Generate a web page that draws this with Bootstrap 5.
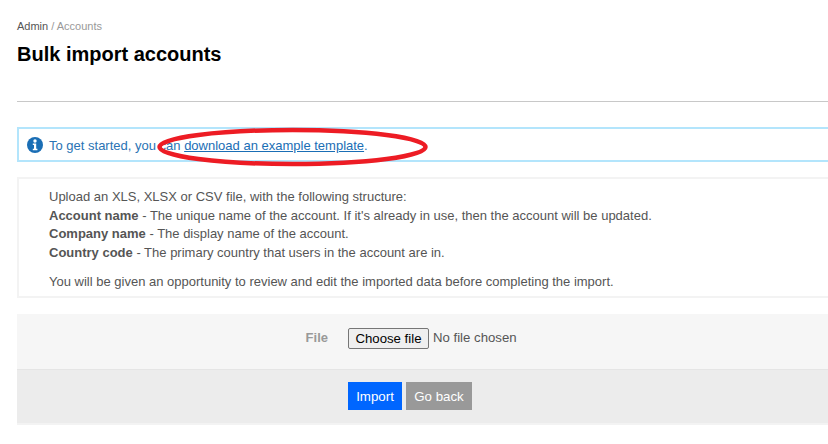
<!DOCTYPE html>
<html lang="en">
<head>
<meta charset="utf-8">
<title>Bulk import accounts</title>
<link href="https://cdn.jsdelivr.net/npm/bootstrap@5.3.0/dist/css/bootstrap.min.css" rel="stylesheet">
<style>
html,body{height:444px;overflow:hidden;background:#fff}
body{font-family:"Liberation Sans",Arial,sans-serif;font-size:13px;color:#555;position:relative}
.page-wrap{padding:19px 0 0 17px;width:828px}
.crumbs{font-size:11px;line-height:14px;color:#999}
.crumbs span{color:#555}
.page-title{font-size:20px;font-weight:700;line-height:24px;color:#000;margin:9px 0 0}
.rule-line{height:1px;background:#c8c8c8;margin-top:35px}
.info-box{height:35px;margin-top:25px;border:2px solid #b3e5fc;border-right:0;padding-left:8px;color:#2a73b4;font-size:13px;gap:6px}
.info-box svg{margin-top:1px}
.info-box div{padding-top:3px}
.info-box a{color:#1a6eb5}
.struct-box{height:121px;margin-top:15px;border:2px solid #f3f3f3;border-right:0;padding:9px 0 0 30px;line-height:18.7px;font-size:13px}
.struct-box p{margin:10px 0 0}
.form-top{height:56px;margin-top:16px;background:#f6f6f6;border-bottom:1px solid #e5e5e5;padding-top:13px;color:#555}
.form-top label{width:311px;text-align:right;font-weight:700;color:#999;font-size:13px;line-height:22px}
.pick-file{margin-left:20px;gap:4px;line-height:22px;font-size:13.2px}
.pick-btn{height:21px;width:81px;padding:0;border:1px solid #767676;border-radius:2px;background:#efefef;color:#000;font-size:13.2px;line-height:19px}
.form-foot{height:55px;background:#ececec;border-bottom:2px solid #f3f3f3;padding:12px 0 0 331px;gap:4px}
.form-foot .btn{height:28px;padding:1px 0 0;border:0;border-radius:0;font-size:13.3px;line-height:27px;color:#fff}
.form-foot .btn-import{background:#06f;width:54px}
.form-foot .btn-back{background:#999;width:66px}
.ring{position:absolute;left:150px;top:122px;width:290px;height:50px;pointer-events:none}
</style>
</head>
<body>
<div class="page-wrap">
  <div class="crumbs"><span>Admin</span> / Accounts</div>
  <h1 class="page-title">Bulk import accounts</h1>
  <div class="rule-line"></div>
  <div class="info-box d-flex align-items-center">
    <svg width="16" height="16" viewBox="0 0 16 16"><circle cx="8" cy="8" r="8" fill="#1a6eb5"/><circle cx="8" cy="4" r="1.7" fill="#fff"/><path d="M5.8 6.5h3.4v5.3h1.2v1.5H5.8v-1.5H7V8H5.8z" fill="#fff"/></svg>
    <div>To get started, you can <a href="#">download an example template</a>.</div>
  </div>
  <div class="struct-box">
    <div>Upload an XLS, XLSX or CSV file, with the following structure:</div>
    <div><strong>Account name</strong> - The unique name of the account. If it's already in use, then the account will be updated.</div>
    <div><strong>Company name</strong> - The display name of the account.</div>
    <div><strong>Country code</strong> - The primary country that users in the account are in.</div>
    <p>You will be given an opportunity to review and edit the imported data before completing the import.</p>
  </div>
  <form>
    <div class="form-top d-flex align-items-start">
      <label>File</label>
      <div class="pick-file d-flex align-items-center">
        <button type="button" class="pick-btn">Choose file</button>
        <span>No file chosen</span>
      </div>
    </div>
    <div class="form-foot d-flex">
      <button type="button" class="btn btn-import">Import</button>
      <button type="button" class="btn btn-back">Go back</button>
    </div>
  </form>
</div>
<svg class="ring" viewBox="0 0 290 50"><ellipse cx="142.5" cy="25" rx="133" ry="17" fill="none" stroke="#ed1c24" stroke-width="4.5"/></svg>
</body>
</html>
